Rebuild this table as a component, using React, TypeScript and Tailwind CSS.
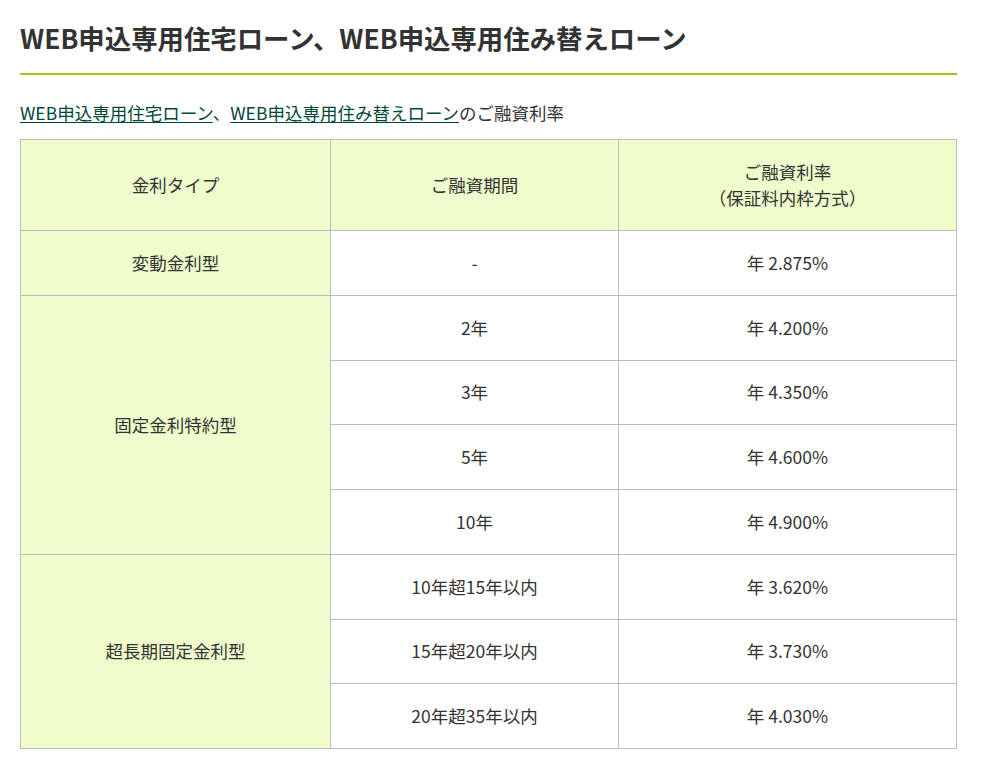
const rows: { type?: string; span?: number; term: string; rate: string }[] = [
  { type: '変動金利型', span: 1, term: '-', rate: '年 2.875%' },
  { type: '固定金利特約型', span: 4, term: '2年', rate: '年 4.200%' },
  { term: '3年', rate: '年 4.350%' },
  { term: '5年', rate: '年 4.600%' },
  { term: '10年', rate: '年 4.900%' },
  { type: '超長期固定金利型', span: 3, term: '10年超15年以内', rate: '年 3.620%' },
  { term: '15年超20年以内', rate: '年 3.730%' },
  { term: '20年超35年以内', rate: '年 4.030%' },
];

const cell = 'border border-[#bbbbbb] text-center align-middle';

export default function App() {
  return (
    <div
      className="min-h-screen bg-white px-5 text-[#333333]"
      style={{ fontFamily: '"Noto Sans CJK JP", "Noto Sans", sans-serif' }}
    >
      <h1 className="w-[937px] border-b-2 border-[#9ec31a] pt-[18px] pb-[16px] text-[26.4px] font-bold leading-[39px]">
        WEB申込専用住宅ローン、WEB申込専用住み替えローン
      </h1>

      <p className="mt-[25px] text-[17.5px] leading-[26px]">
        <a href="#" className="text-[#00473a] underline underline-offset-2">
          WEB申込専用住宅ローン
        </a>
        、
        <a href="#" className="text-[#00473a] underline underline-offset-2">
          WEB申込専用住み替えローン
        </a>
        のご融資利率
      </p>

      <table className="mt-[13px] w-[937px] border-collapse text-[17.5px] leading-[26px]">
        <thead>
          <tr className="h-[91px] bg-[#effccb]">
            <th className={`${cell} w-[310px] font-normal`}>金利タイプ</th>
            <th className={`${cell} w-[288px] font-normal`}>ご融資期間</th>
            <th className={`${cell} font-normal`}>
              ご融資利率
              <br />
              （保証料内枠方式）
            </th>
          </tr>
        </thead>
        <tbody>
          {rows.map((r, i) => (
            <tr key={i} className="h-[64.75px]">
              {r.type && (
                <td rowSpan={r.span} className={`${cell} bg-[#effccb]`}>
                  {r.type}
                </td>
              )}
              <td className={cell}>{r.term}</td>
              <td className={cell}>{r.rate}</td>
            </tr>
          ))}
        </tbody>
      </table>
    </div>
  );
}
